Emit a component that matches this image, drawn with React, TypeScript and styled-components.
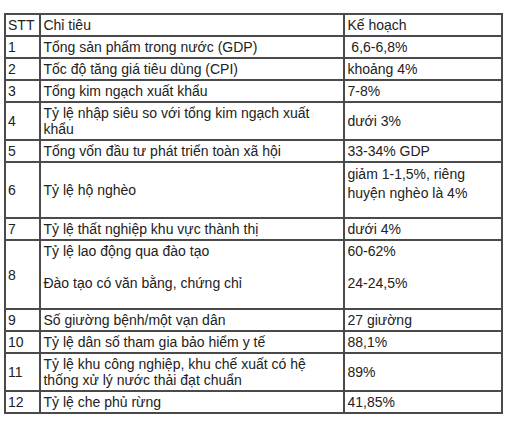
import React from "react";
import styled, { createGlobalStyle } from "styled-components";

const Global = createGlobalStyle`
  html, body { margin: 0; padding: 0; background: #fff; }
  body { font-family: "Liberation Sans", Arial, sans-serif; }
`;

const Page = styled.div`
  padding: 13px 9px 0 4px;
`;

const Table = styled.table`
  width: 499px;
  border-collapse: collapse;
  border: 2px solid #4a4a4a;
  font-family: "Liberation Sans", Arial, sans-serif;
  font-size: 14px;
  line-height: 16px;
  color: #222;
`;

const Cell = styled.td<{ $w?: number; $lh?: number }>`
  border: 2px solid #4a4a4a;
  padding: 2px 5px 2px 2px;
  vertical-align: middle;
  ${(p) => (p.$w ? `width: ${p.$w}px;` : "")}
  ${(p) => (p.$lh ? `line-height: ${p.$lh}px;` : "")}
`;

const Line = styled.div<{ $gap?: number }>`
  min-height: ${(p) => (p.$gap !== undefined ? `${p.$gap}px` : "1em")};
`;

type RowData = { n: string; a: string[]; b: string[]; gap?: number; blh?: number };

const rows: RowData[] = [
  { n: "STT", a: ["Chỉ tiêu"], b: ["Kế hoạch"] },
  { n: "1", a: ["Tổng sản phẩm trong nước (GDP)"], b: ["\u00a06,6-6,8%"] },
  { n: "2", a: ["Tốc độ tăng giá tiêu dùng (CPI)"], b: ["khoảng 4%"] },
  { n: "3", a: ["Tổng kim ngạch xuất khẩu"], b: ["7-8%"] },
  { n: "4", a: ["Tỷ lệ nhập siêu so với tổng kim ngạch xuất khẩu"], b: ["dưới 3%"] },
  { n: "5", a: ["Tổng vốn đầu tư phát triển toàn xã hội"], b: ["33-34% GDP"] },
  {
    n: "6",
    a: ["Tỷ lệ hộ nghèo"],
    b: ["giảm 1-1,5%, riêng huyện nghèo là 4%", ""],
    gap: 12,
    blh: 19,
  },
  { n: "7", a: ["Tỷ lệ thất nghiệp khu vực thành thị"], b: ["dưới 4%"] },
  {
    n: "8",
    a: ["Tỷ lệ lao động qua đào tạo", "", "Đào tạo có văn bằng, chứng chỉ", ""],
    b: ["60-62%", "", "24-24,5%", ""],
    gap: 15.5,
  },
  { n: "9", a: ["Số giường bệnh/một vạn dân"], b: ["27 giường"] },
  { n: "10", a: ["Tỷ lệ dân số tham gia bảo hiểm y tế"], b: ["88,1%"] },
  {
    n: "11",
    a: ["Tỷ lệ khu công nghiệp, khu chế xuất có hệ thống xử lý nước thải đạt chuẩn"],
    b: ["89%"],
  },
  { n: "12", a: ["Tỷ lệ che phủ rừng"], b: ["41,85%"] },
];

const Lines = ({ items, gap }: { items: string[]; gap?: number }) => (
  <>
    {items.map((t, i) => (
      <Line key={i} $gap={t === "" ? gap : undefined}>
        {t}
      </Line>
    ))}
  </>
);

export default function App() {
  return (
    <Page>
      <Global />
      <Table>
        <tbody>
          {rows.map((r, i) => (
            <tr key={i}>
              <Cell $w={24}>{r.n}</Cell>
              <Cell $w={295}>
                <Lines items={r.a} gap={r.gap} />
              </Cell>
              <Cell $lh={r.blh}>
                <Lines items={r.b} gap={r.gap} />
              </Cell>
            </tr>
          ))}
        </tbody>
      </Table>
    </Page>
  );
}
